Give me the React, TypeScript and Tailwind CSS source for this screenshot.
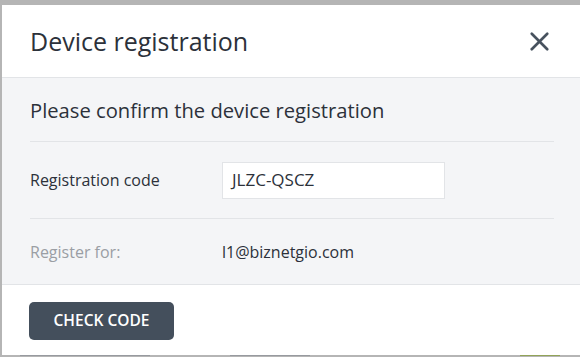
import { X } from 'lucide-react'

export default function App() {
  return (
    <div className="relative h-[357px] w-[580px] overflow-hidden bg-[#b5b5b5] font-['Open_Sans',sans-serif]">
      {/* faint page content peeking below the dialog */}
      <div className="absolute bottom-0 left-[20px] flex h-[3px] gap-[80px]">
        <div className="h-[2px] w-[130px] bg-[#6b7280]/40" />
        <div className="h-[2px] w-[80px] bg-[#6b7280]/40" />
        <div className="ml-[130px] h-[2px] w-[40px] bg-[#7c9a1a]/60" />
      </div>

      <div className="absolute left-[2px] top-[5px] flex h-[350px] w-[580px] flex-col bg-white">
        {/* Header */}
        <div className="flex h-[73px] shrink-0 items-center justify-between border-b border-[#e2e4e7] pl-[28px] pr-[27px]">
          <h1 className="text-[25px] leading-none text-[#2c313a]">Device registration</h1>
          <X className="h-[31px] w-[31px] text-[#47525e]" strokeWidth={2.1} />
        </div>

        {/* Body */}
        <div className="flex h-[207px] shrink-0 flex-col border-b border-[#e2e4e7] bg-[#f4f5f7] px-[28px]">
          <div className="flex h-[64px] items-center border-b border-[#e2e4e7] pt-[1px]">
            <p className="text-[20.2px] text-[#2c313a]">Please confirm the device registration</p>
          </div>
          <div className="flex h-[77px] items-center border-b border-[#e2e4e7]">
            <span className="w-[192px] text-[16px] text-[#2c313a]">Registration code</span>
            <div className="flex h-[37px] w-[223px] items-center border border-[#e2e4e7] bg-white px-[9px] text-[17px] text-[#2c313a]">
              JLZC-QSCZ
            </div>
          </div>
          <div className="flex h-[65px] items-center">
            <span className="w-[192px] text-[16px] text-[#9a9ea4]">Register for:</span>
            <span className="text-[16px] text-[#2c313a]">l1@biznetgio.com</span>
          </div>
        </div>

        {/* Footer */}
        <div className="flex flex-1 items-center px-[27px] pt-[2px]">
          <button className="h-[38px] w-[145px] rounded-[5px] bg-[#444f5c] text-[15.5px] font-semibold text-white">
            CHECK CODE
          </button>
        </div>
      </div>
    </div>
  )
}
